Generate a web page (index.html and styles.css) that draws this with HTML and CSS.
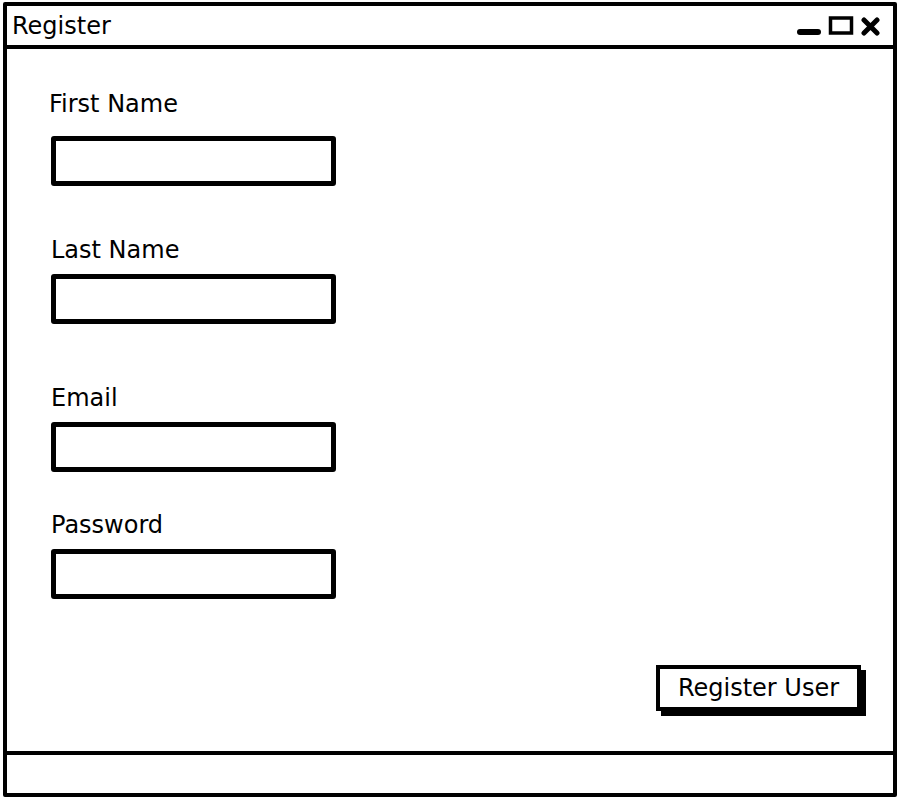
FILE: index.html
```html
<!DOCTYPE html>
<html lang="en">

<head>
  <meta charset="UTF-8" />
  <title>Register</title>
  <link rel="stylesheet" href="styles.css">
</head>

<body>
  <div class="window">
    <!-- 标题栏 -->
    <div class="titlebar">
      <span class="title">Register</span>
      <svg class="controls" width="84" height="20" viewBox="0 0 84 20">
        <rect x="0" y="13" width="24" height="6" rx="3" fill="#000" />
        <rect x="33.5" y="2" width="21" height="15" fill="none" stroke="#000" stroke-width="3.5" />
        <path d="M67 4 L80 17 M80 4 L67 17" stroke="#000" stroke-width="5" stroke-linecap="round" />
      </svg>
    </div>

    <!-- 表单 -->
    <div class="content">
      <div class="field field-first">
        <label class="label">First Name</label>
        <div class="input"></div>
      </div>
      <div class="field field-last">
        <label class="label">Last Name</label>
        <div class="input"></div>
      </div>
      <div class="field field-email">
        <label class="label">Email</label>
        <div class="input"></div>
      </div>
      <div class="field field-password">
        <label class="label">Password</label>
        <div class="input"></div>
      </div>
      <div class="actions">
        <div class="btn">Register User</div>
      </div>
    </div>

    <!-- 状态栏 -->
    <div class="statusbar"></div>
  </div>
</body>

</html>
```

FILE: styles.css
```css
body {
  margin: 0;
  padding: 0;
  background-color: #fff;
  font-family: "DejaVu Sans", "Noto Sans", sans-serif;
  color: #000;
}

.window {
  box-sizing: border-box;
  width: 894px;
  height: 795px;
  margin: 2px 0 0 3px;
  border: 4px solid #000;
  border-radius: 2px;
  display: flex;
  flex-direction: column;
}

.titlebar {
  height: 39px;
  flex: none;
  border-bottom: 4px solid #000;
  display: flex;
  align-items: center;
  justify-content: space-between;
  padding: 0 12px 0 5px;
}

.title {
  font-size: 24px;
  line-height: 28px;
}

.controls {
  display: block;
}

.content {
  flex: 1;
  padding: 41px 44px 0 44px;
  display: flex;
  flex-direction: column;
}

.label {
  display: block;
  font-size: 24px;
  line-height: 28px;
}

.input {
  box-sizing: border-box;
  width: 285px;
  height: 50px;
  margin-top: 10px;
  border: 5px solid #000;
  border-radius: 3px;
}

.field-first .label {
  margin-left: -2px;
}

.field-first .input {
  margin-top: 18px;
}

.field-last {
  margin-top: 50px;
}

.field-email {
  margin-top: 60px;
}

.field-password {
  margin-top: 39px;
}

.actions {
  display: flex;
  justify-content: flex-end;
  margin-top: 66px;
  padding-right: 32px;
  margin-right: -44px;
}

.btn {
  box-sizing: border-box;
  width: 205px;
  height: 46px;
  border: 4px solid #000;
  box-shadow: 5px 5px 0 #000;
  display: flex;
  align-items: center;
  justify-content: center;
  font-size: 24px;
  line-height: 28px;
  background-color: #fff;
}

.statusbar {
  height: 38px;
  flex: none;
  border-top: 4px solid #000;
}
```
